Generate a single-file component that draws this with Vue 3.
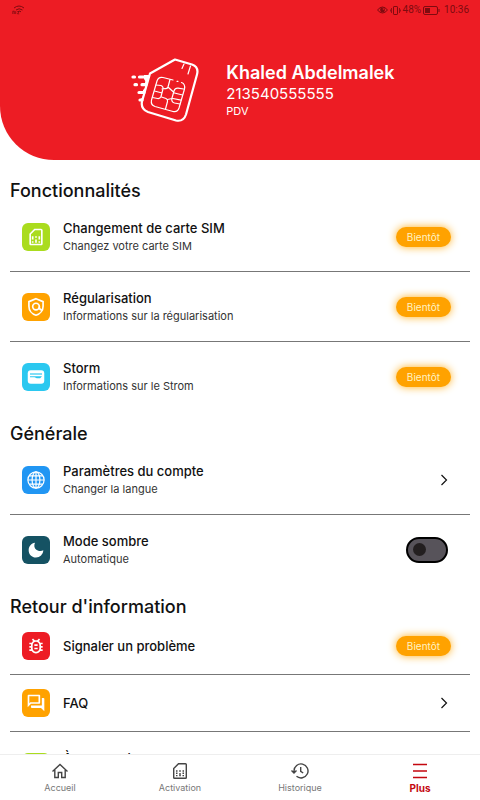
<script setup>
import { ref } from 'vue'

const dark = ref(false)

const sections = [
  {
    title: 'Fonctionnalités',
    rows: [
      { icon: 'sim', tone: 'lime', title: 'Changement de carte SIM', text: 'Changez votre carte SIM', kind: 'soon' },
      { icon: 'shield', tone: 'orange', title: 'Régularisation', text: 'Informations sur la régularisation', kind: 'soon' },
      { icon: 'card', tone: 'cyan', title: 'Storm', text: 'Informations sur le Strom', kind: 'soon' }
    ]
  },
  {
    title: 'Générale',
    rows: [
      { icon: 'globe', tone: 'blue', title: 'Paramètres du compte', text: 'Changer la langue', kind: 'link' },
      { icon: 'moon', tone: 'teal', title: 'Mode sombre', text: 'Automatique', kind: 'switch' }
    ]
  },
  {
    title: "Retour d'information",
    rows: [
      { icon: 'bug', tone: 'red', title: 'Signaler un problème', kind: 'soon' },
      { icon: 'forum', tone: 'orange', title: 'FAQ', kind: 'link' },
      { icon: 'sim', tone: 'lime', title: 'À propos de nous', text: 'Version', kind: 'link' }
    ]
  }
]

const tags = { soon: 'div', link: 'a', switch: 'label' }
</script>

<template>
  <div class="screen">
    <header class="top">
      <div class="status">
        <svg class="wifi" viewBox="0 0 13 10" fill="none" stroke="currentColor">
          <path d="M2 3Q7-1 12 3M4 5Q7 2.500 10.500 5M6 6.800Q7.500 5.500 9 6.800" />
          <path d="M.8 9V6.200H2.300V9M3.700 9V6.200M5.300 6.500H7L5.500 8.800H7.200" stroke-width=".8" />
        </svg>
        <div class="status-right">
          <svg class="eye" viewBox="0 0 11 8">
            <path d="M.5 4Q5.500-2 10.500 4Q5.500 10 .5 4Z" fill="none" stroke="currentColor" />
            <circle cx="5.500" cy="4" r="2.400" fill="currentColor" />
            <circle cx="6.400" cy="3" r=".8" fill="#ed1c24" />
          </svg>
          <svg class="vibrate" viewBox="0 0 11 9" fill="none" stroke="currentColor">
            <rect x="3.500" y=".5" width="4" height="8" rx=".6" />
            <path d="M1.500 2V7M9.500 2V7M.4 3.500V5.500M10.600 3.500V5.500" stroke-width=".8" />
          </svg>
          <span>48%</span>
          <svg class="battery" viewBox="0 0 17 9">
            <rect x=".5" y=".5" width="14" height="8" rx="1.500" fill="none" stroke="currentColor" />
            <path d="M2 2H7V7H2ZM15.500 3H16.500V6H15.500Z" fill="currentColor" />
          </svg>
          <span class="time">10:36</span>
        </div>
      </div>
      <div class="profile">
        <svg class="logo" viewBox="0 0 68 66" fill="none" stroke="#fff" stroke-linecap="round" stroke-linejoin="round">
          <path d="M44 2.500L61 7.500Q68 10 66 17.500L55 57.500Q52.500 65 45 63.500L17 55Q9.500 52 11 44.500L19 16.500Z" stroke-width="2.200" />
          <path d="M53 7L51 11.500M59.500 9L57 17" stroke-width="1.200" />
          <g stroke-width="1.200">
            <path d="M42 23L32 20.500Q27.500 19.500 26 24L20.500 43Q19.500 48 24 49.500L42 54.500Q46.500 55.500 48 51L53.500 32Q54.500 27 50.500 25.500M46 24.300H47" />
            <path d="M39 22.500L37 30Q36.500 32 34 31.500L31 32M25 28L30 28.500Q32.500 29.500 32 32L30 39.500Q29 42 26.500 41.500L21.500 40.500M23.500 34L31 36M51.500 38L43.500 36M52.500 32L47 31.200Q44 31 43 34L41 41Q40 45 43.500 46L49 47M42 41.500L50 43.200M30.500 40L35 41.500Q37 42.500 36.500 44.500L34.500 52M36.500 42.500L41 41.500M37.500 30.500L42.500 35" />
          </g>
          <path d="M19 18H13V22Q15 24 14 26V30Q14 32 12 33V38Q12 40 10 42L11 45Z" fill="#fff" stroke="none" />
          <path d="M2 20H3.500M8.500 20H16M4 27.700H5.500M11 27.700H15M8 35.500H13M9 43H11" stroke-width="3.200" />
        </svg>
        <div class="who">
          <h1>Khaled Abdelmalek</h1>
          <p class="phone">213540555555</p>
          <p class="role">PDV</p>
        </div>
      </div>
    </header>

    <main class="content">
      <section v-for="section in sections" :key="section.title">
        <h2>{{ section.title }}</h2>
        <component
          :is="tags[row.kind]"
          v-for="row in section.rows"
          :key="row.title"
          class="row"
          :class="{ short: !row.text }"
          :href="row.kind === 'link' ? '#' : undefined"
          :for="row.kind === 'switch' ? 'dark-mode' : undefined"
        >
          <span class="tile" :class="row.tone">
            <svg v-if="row.icon === 'sim'" class="large" viewBox="0 0 24 24" fill="currentColor">
              <path d="M18 2h-8L4 8v12c0 1.100.9 2 2 2h12c1.100 0 2-.9 2-2V4c0-1.100-.9-2-2-2zm0 18H6V8.830L10.830 4H18v16zM7 17h2v2H7zM15 17h2v2h-2zM7 11h2v4H7zM11 15h2v4h-2zM11 11h2v2h-2zM15 11h2v4h-2z" />
            </svg>
            <svg v-else-if="row.icon === 'shield'" class="large" viewBox="0 0 24 24" fill="none" stroke="currentColor" stroke-width="2">
              <path d="M12 2.100L20.500 5.600V11C20.500 16 17 20.500 12 21.900C7 20.500 3.500 16 3.500 11V5.600Z" />
              <circle cx="12" cy="11.500" r="4" />
              <path d="M16 11.500V12.500Q16 15 19 15.500" />
            </svg>
            <svg v-else-if="row.icon === 'card'" viewBox="0 0 24 24">
              <rect x="1" y="3" width="22" height="18" rx="4" fill="currentColor" />
              <path d="M4 8H20" stroke="#2bc8f0" stroke-width="1.600" />
              <path d="M4 11H20L17.500 13.500H13L10 12.200H4Z" fill="#2bc8f0" />
            </svg>
            <svg v-else-if="row.icon === 'globe'" viewBox="0 0 24 24" fill="none" stroke="currentColor" stroke-width="1.600">
              <circle cx="12" cy="12" r="10.800" />
              <ellipse cx="12" cy="12" rx="5.200" ry="10.800" />
              <path d="M12 1V23M1 12H23M3 6.500H21M3 17.500H21" />
            </svg>
            <svg v-else-if="row.icon === 'moon'" class="small" viewBox="0 0 24 24" fill="currentColor">
              <path d="M10.500 1C8.500 5 9.500 9.500 12.500 11.500C15.500 13.800 20 14 23 12.500C22.500 18.800 18 23.300 12 23.300C5.800 23.300 1 18.500 1 12.300C1 6.300 5 1.500 10.500 1Z" />
            </svg>
            <svg v-else-if="row.icon === 'bug'" class="large" viewBox="0 0 24 24" fill="currentColor">
              <path d="M20 8h-2.810c-.45-.78-1.070-1.450-1.820-1.960L17 4.410 15.590 3l-2.170 2.170C12.960 5.060 12.490 5 12 5s-.96.060-1.410.170L8.410 3 7 4.410l1.620 1.630C7.880 6.550 7.260 7.220 6.810 8H4v2h2.090c-.05.33-.09.66-.09 1v1H4v2h2v1c0 .34.040.67.090 1H4v2h2.810c1.040 1.790 2.970 3 5.190 3s4.150-1.210 5.190-3H20v-2h-2.090c.05-.33.090-.66.090-1v-1h2v-2h-2v-1c0-.34-.04-.67-.09-1H20V8zm-4 7c0 2.210-1.790 4-4 4s-4-1.790-4-4v-4c0-2.210 1.790-4 4-4s4 1.790 4 4v4zM10 14h4v2h-4zM10 10h4v2h-4z" />
            </svg>
            <svg v-else class="large" viewBox="0 0 24 24" fill="currentColor">
              <path d="M15 4v7H5.170L4 12.170V4h11m1-2H3c-.55 0-1 .45-1 1v14l4-4h10c.55 0 1-.45 1-1V3c0-.55-.45-1-1-1zm5 4h-2v9H6v2c0 .55.450 1 1 1h11l4 4V7c0-.55-.45-1-1-1z" />
            </svg>
          </span>
          <span class="label">
            <span class="title">{{ row.title }}</span>
            <span v-if="row.text" class="sub">{{ row.text }}</span>
          </span>
          <span v-if="row.kind === 'soon'" class="soon">Bientôt</span>
          <input v-else-if="row.kind === 'switch'" id="dark-mode" v-model="dark" class="switch" type="checkbox" role="switch" />
          <svg v-else class="chevron" viewBox="0 0 8 12" fill="none" stroke="currentColor">
            <path d="M1.500 1L6.500 6L1.500 11" stroke-width="1.200" />
          </svg>
        </component>
      </section>
    </main>

    <nav class="tabs">
      <a href="#">
        <svg viewBox="0 0 18 18" fill="none" stroke="currentColor" stroke-width="1.400">
          <path d="M1.500 9.500L9 2.500L16.500 9.500M3.800 8V15.500H7.300V10.500H10.700V15.500H14.200V8" />
        </svg>
        <span>Accueil</span>
      </a>
      <a href="#">
        <svg viewBox="0 0 18 18" fill="none" stroke="currentColor" stroke-width="1.400">
          <path d="M7.500 1.700H14.500Q15.300 1.700 15.300 2.500V15.500Q15.300 16.300 14.500 16.300H3.500Q2.700 16.300 2.700 15.500V6.500Z" />
          <path d="M5 9H6.500M8.200 9H9.800M11.500 9H13M5 11.300H6.500M11.500 11.300H13M5 13.600H6.500M8.200 13.600H9.800M11.500 13.600H13M9 11V13" />
        </svg>
        <span>Activation</span>
      </a>
      <a href="#">
        <svg viewBox="0 0 18 18" fill="none" stroke="currentColor" stroke-width="1.400">
          <path d="M3 10.500V9A7 7 0 1 1 5.500 14.300M.5 8.500L3 11L5.500 8.500M9.700 5V9.300L12.200 11" />
        </svg>
        <span>Historique</span>
      </a>
      <a href="#" class="active" aria-current="page">
        <svg viewBox="0 0 18 18" fill="none" stroke="currentColor" stroke-width="1.400">
          <path d="M2 2.500H16M2 9H16M2 15.500H16" />
        </svg>
        <span>Plus</span>
      </a>
    </nav>
  </div>
</template>

<style>
body {
  background: #fff;
}
</style>

<style scoped>
.screen {
  display: flex;
  flex-direction: column;
  height: 100vh;
  font-family: Inter, Roboto, sans-serif;
  color: #111;
}
h1,
h2,
p {
  margin: 0;
}
a {
  color: inherit;
  text-decoration: none;
}
svg {
  display: block;
  flex: none;
}
.top {
  flex: none;
  background: #ed1c24;
  color: #fff;
  border-bottom-left-radius: 54px;
}
.status {
  display: flex;
  align-items: center;
  justify-content: space-between;
  height: 20px;
  padding: 0 11px 0 12px;
  font: 10px/12px Roboto, sans-serif;
  color: #7e0b10;
}
.status-right {
  display: flex;
  align-items: center;
  gap: 2px;
}
.wifi {
  width: 13px;
  height: 10px;
}
.eye {
  width: 11px;
  height: 8px;
}
.vibrate {
  width: 11px;
  height: 9px;
}
.battery {
  width: 17px;
  height: 9px;
}
.time {
  margin-left: 2px;
}
.profile {
  display: grid;
  grid-template-columns: 11fr 14fr;
  column-gap: 27px;
  align-items: center;
  padding: 37px 0;
}
.logo {
  width: 68px;
  height: 66px;
  justify-self: end;
}
.who h1 {
  font-size: 18px;
  font-weight: 600;
  line-height: 24px;
}
.phone {
  font-size: 15px;
  line-height: 18px;
}
.role {
  font-size: 11px;
  line-height: 16px;
}
.content {
  flex: 1;
  min-height: 0;
  overflow-y: auto;
  scrollbar-width: none;
  padding: 9px 10px 0;
}
h2 {
  padding-top: 11px;
  font-size: 18px;
  font-weight: 500;
  line-height: 22px;
}
.row {
  display: flex;
  align-items: center;
  box-sizing: border-box;
  height: 70px;
  padding: 0 19px 0 12px;
  border-bottom: 1px solid #777;
}
.row.short {
  height: 57px;
}
.row:last-child {
  border-bottom-color: transparent;
}
.tile {
  display: grid;
  place-items: center;
  flex: none;
  width: 28px;
  height: 28px;
  border-radius: 6px;
  color: #fff;
}
.tile svg {
  width: 18px;
  height: 18px;
}
.tile .large {
  width: 20px;
  height: 20px;
}
.tile .small {
  width: 16px;
  height: 16px;
}
.lime {
  background: #aadc1e;
}
.orange {
  background: #ffa200;
}
.cyan {
  background: #2bc8f0;
}
.blue {
  background: #2196f3;
}
.teal {
  background: #155263;
}
.red {
  background: #ed1c24;
}
.label {
  flex: 1;
  margin-left: 13px;
}
.title,
.sub {
  display: block;
  line-height: 18px;
}
.title {
  font-size: 13px;
  font-weight: 500;
}
.sub {
  font-size: 11px;
  color: #333;
}
.soon {
  padding: 0 11px;
  border-radius: 10px;
  background: #ffa200;
  box-shadow: 0 0 9px #ffb020;
  color: #fff3c4;
  font-size: 10px;
  line-height: 20px;
}
.chevron {
  width: 8px;
  height: 12px;
  margin-right: 3px;
}
.switch {
  appearance: none;
  display: flex;
  align-items: center;
  box-sizing: border-box;
  width: 42px;
  height: 26px;
  margin: 0 3px 0 0;
  padding: 0 5px;
  border: 2px solid #000;
  border-radius: 13px;
  background: #57535a;
}
.switch::before {
  content: '';
  width: 13px;
  height: 13px;
  border-radius: 50%;
  background: #231f20;
}
.switch:checked {
  justify-content: flex-end;
}
.tabs {
  display: grid;
  grid-template-columns: repeat(4, 1fr);
  flex: none;
  border-top: 1px solid #eee;
  background: #fff;
}
.tabs a {
  display: flex;
  flex-direction: column;
  align-items: center;
  gap: 2px;
  padding: 7px 0 6px;
  font-size: 9px;
  line-height: 12px;
  color: #777;
}
.tabs svg {
  width: 18px;
  height: 18px;
  color: #444;
}
.tabs .active,
.tabs .active svg {
  color: #c4070f;
}
.tabs .active {
  font-size: 10px;
  font-weight: 700;
}
</style>
